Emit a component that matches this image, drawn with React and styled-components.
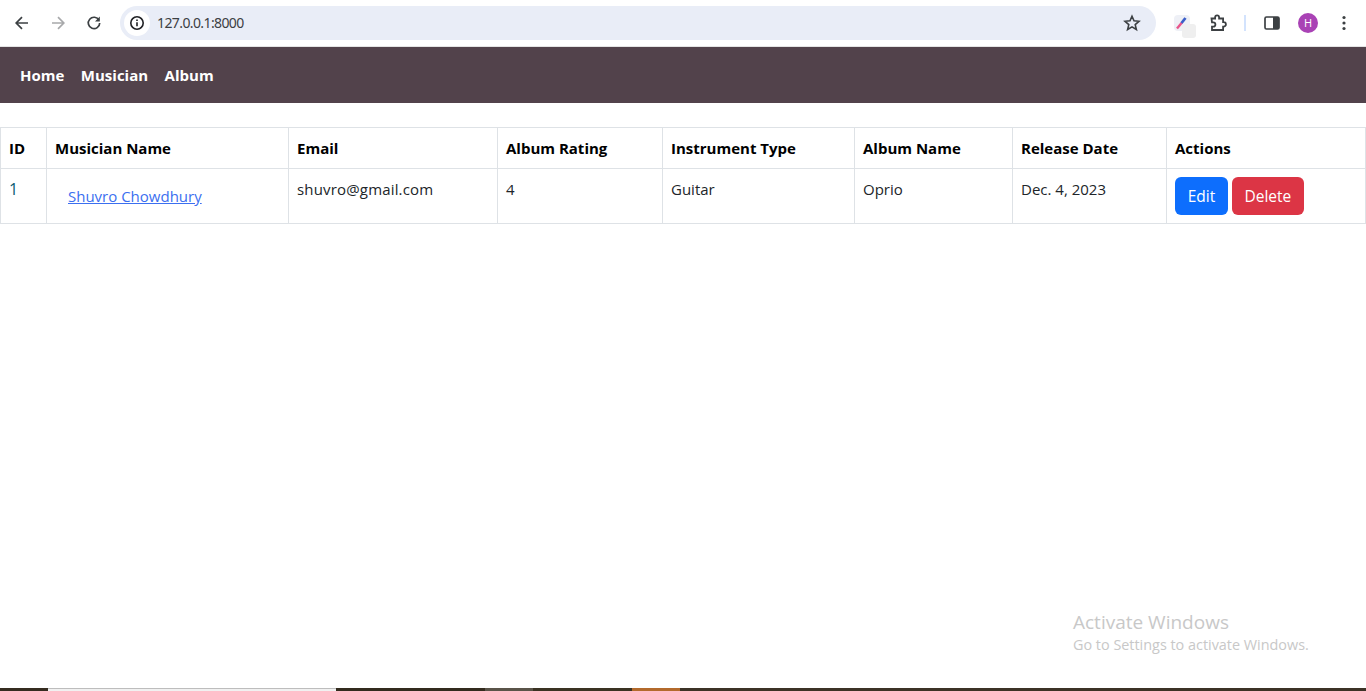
import React from "react";
import styled, { createGlobalStyle } from "styled-components";

const GlobalStyle = createGlobalStyle`
  html, body { margin: 0; padding: 0; height: 100%; background: #fff; overflow: hidden; }
  body { font-family: "Open Sans", "Noto Sans", sans-serif; font-size: 16px; color: #212529; }
  * { box-sizing: border-box; }
`;

const columns = [46, 242, 209, 165, 192, 158, 154, 199];
const headers = ["ID", "Musician Name", "Email", "Album Rating", "Instrument Type", "Album Name", "Release Date", "Actions"];
const stripParts = [
  { w: 48, c: "#352c20" }, { w: 288, c: "#f1f1f1", light: true }, { w: 149, c: "#332b1e" },
  { w: 48, c: "#5a5449" }, { w: 99, c: "#3a3223" }, { w: 48, c: "#b36a2c" }, { w: 686, c: "#3c3226" },
];

function App() {
  return (
    <Page>
      <GlobalStyle />
      <BrowserBar>
        <NavIcons>
          <IconBtn>
            <svg width="16" height="16" viewBox="0 0 16 16" fill="none" stroke="#3c4043" strokeWidth="1.7">
              <path d="M14 8H2.5M8 2.2 2.2 8 8 13.8" />
            </svg>
          </IconBtn>
          <IconBtn>
            <svg width="16" height="16" viewBox="0 0 16 16" fill="none" stroke="#a8a9ab" strokeWidth="1.7">
              <path d="M2 8h11.5M8 2.2 13.8 8 8 13.8" />
            </svg>
          </IconBtn>
          <IconBtn>
            <svg width="16" height="16" viewBox="0 0 16 16" fill="none" stroke="#3c4043" strokeWidth="1.7">
              <path d="M13 5.2A5.7 5.7 0 1 0 13.7 8" />
              <path d="M13.8 1.6v4.8H9" fill="#3c4043" stroke="none" />
            </svg>
          </IconBtn>
        </NavIcons>
        <Omnibox>
          <InfoChip>
            <svg width="16" height="16" viewBox="0 0 16 16" fill="none" stroke="#202124" strokeWidth="1.6">
              <circle cx="8" cy="8" r="6.2" />
              <path d="M8 7.2v4M8 4.4v1.6" />
            </svg>
          </InfoChip>
          <Url>127.0.0.1:8000</Url>
          <svg width="18" height="18" viewBox="0 0 18 18" fill="none" stroke="#3c4043" strokeWidth="1.6">
            <path d="M9 2.2l2 4.6 5 .5-3.8 3.3 1.2 4.9L9 12.9l-4.4 2.6 1.2-4.9L2 7.3l5-.5z" />
          </svg>
        </Omnibox>
        <Tools>
          <ToolSlot $w={36}>
            <ExtensionTile>
              <svg width="16" height="16" viewBox="0 0 16 16" fill="none">
                <path d="M3 13.5 8 7.5" stroke="#e8558a" strokeWidth="2.4" />
                <path d="M7.5 8 11.5 3" stroke="#3b5fc9" strokeWidth="2.8" />
              </svg>
              <ExtensionBadge />
            </ExtensionTile>
          </ToolSlot>
          <ToolSlot $w={36}>
            <svg width="18" height="18" viewBox="0 0 18 18" fill="none" stroke="#3c4043" strokeWidth="1.8">
              <path d="M2.5 4.5h3.6V3.4a2 2 0 0 1 4 0v1.1h4v3.7h.6a2.2 2.2 0 0 1 0 4.4h-.6v3.4H3v-3.3h1.2a2.2 2.2 0 0 0 0-4.4H3z" />
            </svg>
          </ToolSlot>
          <ToolSlot $w={18}>
            <Divider />
          </ToolSlot>
          <ToolSlot $w={36}>
            <svg width="16" height="14" viewBox="0 0 16 14">
              <rect x="1" y="1" width="14" height="12" rx="1.5" fill="none" stroke="#3c4043" strokeWidth="1.7" />
              <rect x="9" y="1" width="6" height="12" fill="#3c4043" />
            </svg>
          </ToolSlot>
          <ToolSlot $w={36}>
            <Avatar>H</Avatar>
          </ToolSlot>
          <ToolSlot $w={36}>
            <svg width="4" height="16" viewBox="0 0 4 16" fill="#3c4043">
              <circle cx="2" cy="2.5" r="1.6" />
              <circle cx="2" cy="8" r="1.6" />
              <circle cx="2" cy="13.5" r="1.6" />
            </svg>
          </ToolSlot>
        </Tools>
      </BrowserBar>

      <Navbar>
        <NavLink>Home</NavLink>
        <NavLink>Musician</NavLink>
        <NavLink>Album</NavLink>
      </Navbar>

      <Main>
        <Table>
          <colgroup>
            {columns.map((w, i) => (
              <Col key={i} $w={w} />
            ))}
          </colgroup>
          <thead>
            <tr>
              {headers.map((h) => (
                <Th key={h}>{h}</Th>
              ))}
            </tr>
          </thead>
          <tbody>
            <tr>
              <IdCell>1</IdCell>
              <Td>
                <NameLink href="#">Shuvro Chowdhury</NameLink>
              </Td>
              <Td $wide>shuvro@gmail.com</Td>
              <Td>4</Td>
              <Td>Guitar</Td>
              <Td>Oprio</Td>
              <Td>Dec. 4, 2023</Td>
              <Td>
                <Btn $bg="#0d6efd" $w={53}>Edit</Btn> <Btn $bg="#dc3545" $w={72}>Delete</Btn>
              </Td>
            </tr>
          </tbody>
        </Table>
        <Watermark>
          <WatermarkTitle>Activate Windows</WatermarkTitle>
          <WatermarkText>Go to Settings to activate Windows.</WatermarkText>
        </Watermark>
      </Main>

      <Strip>
        {stripParts.map((p, i) => (
          <StripPart key={i} $w={p.w} $c={p.c} $light={p.light} />
        ))}
      </Strip>
    </Page>
  );
}

export default App;

const Page = styled.div`
  height: 691px;
  display: flex;
  flex-direction: column;
`;

const BrowserBar = styled.div`
  height: 47px;
  flex: none;
  display: flex;
  align-items: center;
  background: #fff;
  border-bottom: 1px solid #e4e4e4;
  padding: 0 0 1px 4px;
`;

const NavIcons = styled.div`
  display: flex;
  align-items: center;
`;

const IconBtn = styled.div`
  width: 36px;
  height: 32px;
  display: flex;
  align-items: center;
  justify-content: center;
`;

const Omnibox = styled.div`
  width: 1036px;
  height: 34px;
  margin-left: 8px;
  display: flex;
  align-items: center;
  padding: 0 15px 0 4px;
  border-radius: 17px;
  background: #e9edf7;
`;

const InfoChip = styled.div`
  width: 26px;
  height: 26px;
  border-radius: 50%;
  background: #fff;
  display: flex;
  align-items: center;
  justify-content: center;
`;

const Url = styled.span`
  flex: 1;
  margin-left: 7px;
  font-family: "Noto Sans", sans-serif;
  font-size: 14px;
  letter-spacing: -0.6px;
  color: #3c4043;
`;

const Tools = styled.div`
  display: flex;
  align-items: center;
  padding-left: 8px;
`;

const ToolSlot = styled.div`
  width: ${(p) => p.$w}px;
  display: flex;
  align-items: center;
  justify-content: center;
`;

const ExtensionTile = styled.div`
  position: relative;
  width: 16px;
  height: 16px;
  border-radius: 4px;
  background: #eef0f6;
  display: flex;
  align-items: center;
  justify-content: center;
`;

const ExtensionBadge = styled.div`
  position: absolute;
  right: -6px;
  bottom: -7px;
  width: 14px;
  height: 14px;
  border-radius: 3px;
  background: #efefef;
`;

const Divider = styled.div`
  width: 2px;
  height: 16px;
  background: #d3e3fd;
`;

const Avatar = styled.div`
  width: 20px;
  height: 20px;
  border-radius: 50%;
  background: #a942b5;
  color: #fff;
  font-size: 11px;
  display: flex;
  align-items: center;
  justify-content: center;
`;

const Navbar = styled.nav`
  height: 56px;
  flex: none;
  display: flex;
  align-items: center;
  gap: 16.5px;
  padding-left: 20px;
  background: #52424b;
`;

const NavLink = styled.a`
  color: #fff;
  font-weight: 700;
  font-size: 15px;
`;

const Main = styled.main`
  position: relative;
  flex: 1;
  padding-top: 24px;
`;

const Table = styled.table`
  width: 1366px;
  table-layout: fixed;
  border-collapse: collapse;
`;

const Col = styled.col`
  width: ${(p) => p.$w}px;
`;

const Th = styled.th`
  height: 41px;
  padding: 8px;
  text-align: left;
  font-size: 15px;
  font-weight: 700;
  color: #000;
  border: 1px solid #dee2e6;
`;

const Td = styled.td`
  height: 55px;
  padding: 8px;
  vertical-align: top;
  font-size: 15px;
  line-height: 24px;
  letter-spacing: ${(p) => (p.$wide ? "0.17px" : "0")};
  color: #212529;
  border: 1px solid #dee2e6;
`;

const IdCell = styled(Td)`
  font-size: 16px;
  color: #0b5c72;
`;

const NameLink = styled.a`
  display: inline-block;
  padding: 7px 13px;
  color: #3b6ff0;
  text-decoration: underline;
`;

const Btn = styled.button`
  width: ${(p) => p.$w}px;
  height: 38px;
  padding: 0;
  border: none;
  border-radius: 6px;
  background: ${(p) => p.$bg};
  color: #fff;
  font-family: inherit;
  font-size: 15.5px;
`;

const Watermark = styled.div`
  position: absolute;
  left: 1073px;
  top: 506px;
  color: #c8c8c8;
`;

const WatermarkTitle = styled.div`
  font-size: 19px;
  line-height: 26px;
`;

const WatermarkText = styled.div`
  font-size: 14.4px;
  line-height: 19px;
`;

const Strip = styled.div`
  height: 3px;
  flex: none;
  display: flex;
`;

const StripPart = styled.div`
  width: ${(p) => p.$w}px;
  flex: none;
  background: ${(p) => p.$c};
  border-top: ${(p) => (p.$light ? "1px solid #bdbdbd" : "none")};
`;
